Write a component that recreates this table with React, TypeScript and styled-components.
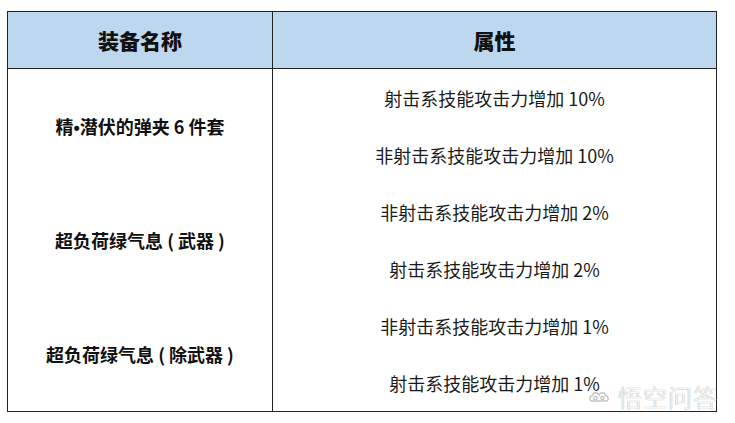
import styled, { createGlobalStyle } from "styled-components";

const GlobalStyle = createGlobalStyle`
  html, body {
    margin: 0;
    padding: 0;
    background: #ffffff;
  }
  body {
    font-family: "Noto Sans CJK SC", "Noto Sans", sans-serif;
    color: #111;
  }
`;

const Page = styled.div`
  position: relative;
  width: 735px;
  height: 423px;
  padding: 11px 0 0 7px;
  box-sizing: border-box;
  overflow: hidden;
`;

const Table = styled.table`
  width: 710px;
  border-collapse: collapse;
  table-layout: fixed;
  border: 1px solid #222;
`;

const HeadCell = styled.th`
  height: 56px;
  padding: 0;
  background: #bdd7ee;
  border: 1px solid #222;
  font-size: 21px;
  font-weight: 900;
  color: #111;
  text-align: center;
  vertical-align: middle;
`;

const NameCell = styled.td`
  padding: 0;
  border-left: 1px solid #222;
  border-right: 1px solid #222;
  font-size: 18px;
  font-weight: 700;
  text-align: center;
  vertical-align: middle;
  white-space: pre;
  color: #111;
`;

const Dot = styled.span`
  font-family: "Liberation Sans", sans-serif;
  font-weight: 700;
`;

const AttrCell = styled.td`
  height: 57px;
  padding: 0;
  font-size: 18px;
  font-weight: 400;
  text-align: center;
  vertical-align: middle;
  color: #1a1a1a;
`;

const Watermark = styled.div`
  position: absolute;
  right: 17px;
  bottom: 14px;
  display: flex;
  align-items: center;
  gap: 8px;
  color: rgba(255, 255, 255, 0.9);
  font-size: 24px;
  line-height: 1;
  letter-spacing: 1px;
  font-family: "Noto Sans CJK SC", sans-serif;
  font-weight: 300;
  text-shadow: 0 0 1px #bdbdbd, 0 0 1px #bdbdbd, 0 0 1px #cfcfcf;
`;

type Group = { name: React.ReactNode; key: string; attrs: string[] };

const groups: Group[] = [
  {
    key: "a",
    name: (
      <>
        精<Dot>•</Dot>潜伏的弹夹 6 件套
      </>
    ),
    attrs: ["射击系技能攻击力增加 10%", "非射击系技能攻击力增加 10%"],
  },
  { key: "b", name: "超负荷绿气息 ( 武器 )", attrs: ["非射击系技能攻击力增加 2%", "射击系技能攻击力增加 2%"] },
  { key: "c", name: "超负荷绿气息 ( 除武器 )", attrs: ["非射击系技能攻击力增加 1%", "射击系技能攻击力增加 1%"] },
];

function Logo() {
  return (
    <svg width="22" height="16" viewBox="0 0 22 16" fill="rgba(255,255,255,0.9)" stroke="#c4c4c4" strokeWidth="1.4">
      <path d="M4 12 C1 12 1 7 4.5 6.5 C5 3 10 3 11 6 C12 3 17 3 17.5 6.5 C21 7 21 12 18 12 Z" />
      <circle cx="7.5" cy="9" r="1.6" />
      <circle cx="14.5" cy="9" r="1.6" />
    </svg>
  );
}

export default function App() {
  return (
    <Page>
      <GlobalStyle />
      <Table>
        <colgroup>
          <col style={{ width: 265 }} />
          <col />
        </colgroup>
        <thead>
          <tr>
            <HeadCell>装备名称</HeadCell>
            <HeadCell>属性</HeadCell>
          </tr>
        </thead>
        <tbody>
          {groups.map((g) =>
            g.attrs.map((a, i) => (
              <tr key={g.key + i}>
                {i === 0 && <NameCell rowSpan={2}>{g.name}</NameCell>}
                <AttrCell>{a}</AttrCell>
              </tr>
            ))
          )}
        </tbody>
      </Table>
      <Watermark>
        <Logo />
        <span>悟空问答</span>
      </Watermark>
    </Page>
  );
}
